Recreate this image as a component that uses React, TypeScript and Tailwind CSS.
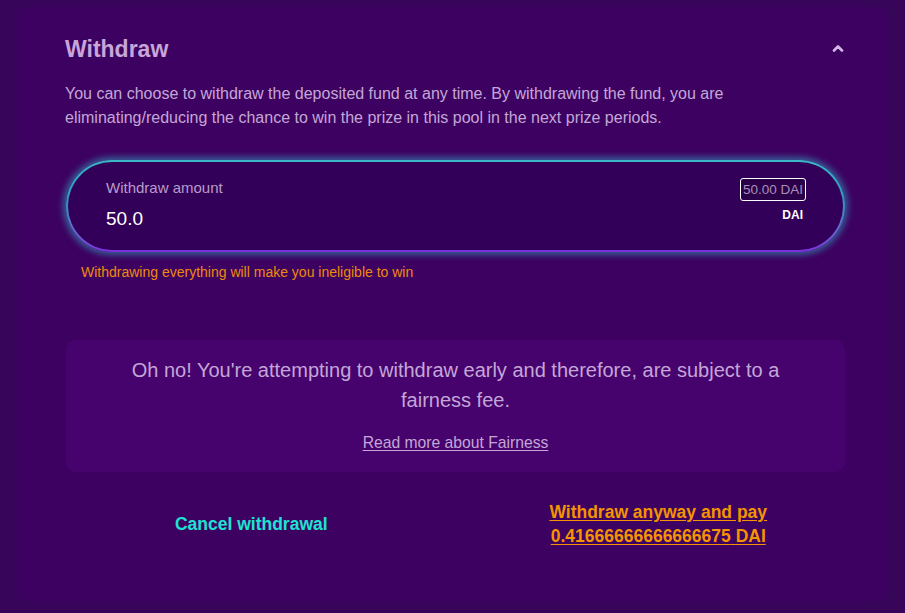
import React from 'react';

const font = { fontFamily: '"Liberation Sans", Arial, sans-serif' };

const ChevronUp: React.FC = () => (
  <svg width="12" height="8" viewBox="0 0 12 8" fill="none">
    <polyline points="2,6.5 6,2.5 10,6.5" stroke="#d3b8e3" strokeWidth="2.6" strokeLinecap="round" strokeLinejoin="round" />
  </svg>
);

const WithdrawPanel: React.FC = () => {
  const amount = '50.0';
  const fee = '0.41666666666666675';

  return (
    <div className="min-h-screen w-full bg-[#37055a] pt-[7px] px-[17px]" style={font}>
      <div className="w-[871px] rounded-[12px] bg-[#3d0261] pt-[28px] pb-[53px] pl-[49px] pr-[43px]">
        {/* Header */}
        <div className="flex h-[28px] items-center justify-between">
          <h2 className="text-[23px] font-bold text-[#c7a6da] -ml-[1px]">Withdraw</h2>
          <div className="mr-[1px] -mt-[2px] flex items-center">
            <ChevronUp />
          </div>
        </div>

        <p className="mt-[19px] w-[700px] text-[16px] leading-[24px] text-[#c4a7d7] -ml-[1px]">
          You can choose to withdraw the deposited fund at any time. By withdrawing the fund, you are
          eliminating/reducing the chance to win the prize in this pool in the next prize periods.
        </p>

        {/* Amount input */}
        <div className="mt-[30px] rounded-full bg-gradient-to-b from-[#3bb8c8] via-[#2f8fc4] to-[#7a2fdc] p-[2px] shadow-[0_0_6px_3px_rgba(50,170,195,0.55)]">
          <div className="flex h-[88px] items-start justify-between rounded-full bg-[#320058] pl-[38px] pr-[37px] pt-[16px]">
            <div className="flex flex-col">
              <span className="text-[15px] leading-[20px] text-[#b99ccb]">Withdraw amount</span>
              <span className="mt-[9px] text-[19px] leading-[24px] text-white">{amount}</span>
            </div>
            <div className="flex flex-col items-end">
              <span className="rounded-[3px] border border-white bg-[#2a0049] px-[2px] text-[13.5px] leading-[21px] text-[#a98fba]">
                50.00 DAI
              </span>
              <span className="mt-[6px] mr-[3px] text-[12px] font-bold leading-[16px] text-white">DAI</span>
            </div>
          </div>
        </div>

        <p className="mt-[11px] pl-[15px] text-[14px] leading-[18px] text-[#ec8b0c]">
          Withdrawing everything will make you ineligible to win
        </p>

        {/* Fairness notice */}
        <div className="mt-[59px] rounded-[10px] bg-[#46036d] px-[40px] pt-[15px] pb-[17px] text-center">
          <p className="mx-auto w-[670px] text-[20px] leading-[30px] text-[#c4a6d7]">
            Oh no! You're attempting to withdraw early and therefore, are subject to a fairness fee.
          </p>
          <a href="#" className="mt-[18px] inline-block text-[15.7px] leading-[20px] text-[#c4a6d7] underline underline-offset-2">
            Read more about Fairness
          </a>
        </div>

        {/* Actions */}
        <div className="mt-[28px] grid grid-cols-2 items-start">
          <div className="flex h-[48px] items-center justify-center pr-[19px]">
            <button className="text-[17.5px] font-bold leading-[24px] text-[#1de3d1]">Cancel withdrawal</button>
          </div>
          <div className="flex justify-center pl-[16px]">
            <button className="w-[232px] text-center text-[17.5px] font-bold leading-[24px] text-[#f39400] underline underline-offset-2">
              Withdraw anyway and pay {fee} DAI
            </button>
          </div>
        </div>
      </div>
    </div>
  );
};

export default function App() {
  return <WithdrawPanel />;
}
